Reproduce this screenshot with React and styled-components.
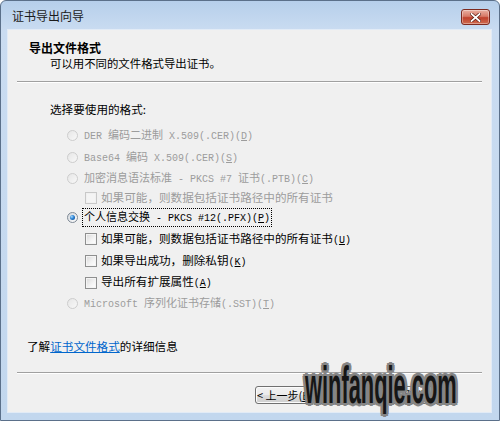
import React from 'react';
import styled, { createGlobalStyle } from 'styled-components';

const GlobalStyle = createGlobalStyle`
  body {
    margin: 0;
    overflow: hidden;
    font-family: "Noto Sans CJK SC", "Liberation Sans", sans-serif;
  }
`;

const Window = styled.div`
  position: relative;
  width: 500px;
  height: 421px;
  box-sizing: border-box;
  border: 1px solid #5b708a;
  border-radius: 6px 6px 0 0;
  background: linear-gradient(180deg, #b6cfeb 0px, #cadcf1 30px, #c2d7ee 100%);
  display: flex;
  flex-direction: column;
  overflow: hidden;
`;

const TitleBar = styled.div`
  height: 28px;
  flex-shrink: 0;
  display: flex;
  align-items: flex-start;
  justify-content: space-between;
  padding: 0 9px 0 11px;
`;

const Caption = styled.div`
  padding-top: 7px;
  font-size: 12px;
  line-height: 16px;
  color: #1b1b1b;
`;

const CloseButton = styled.div`
  margin-top: 8px;
  width: 29px;
  height: 16px;
  box-sizing: border-box;
  border: 1px solid #7d2a20;
  border-radius: 3px;
  background: linear-gradient(180deg, #eab0a2 0%, #d77a68 45%, #c0412d 55%, #cf6c50 100%);
  display: flex;
  align-items: center;
  justify-content: center;
  box-shadow: inset 0 0 0 1px rgba(255, 255, 255, 0.35);
`;

// client area of the dialog
const Client = styled.div`
  flex: 1;
  margin: 0 7px 7px 6px;
  border: 1px solid #e2ebf6;
  background: #f0f0f0;
  display: flex;
  flex-direction: column;
`;

const Header = styled.div`
  padding: 11px 0 0 21px;
`;

const HeaderTitle = styled.div`
  font-size: 12px;
  font-weight: bold;
  line-height: 14px;
  color: #000;
`;

const HeaderSub = styled.div`
  margin-top: 1px;
  padding-left: 21px;
  font-size: 11.4px;
  line-height: 14px;
  color: #000;
`;

const Rule = styled.div`
  margin: ${p => p.$top}px 9px 0;
  border-top: 1px solid #a0a0a0;
  border-bottom: 1px solid #ffffff;
`;

const Body = styled.div`
  padding: 19px 0 0 42px;
`;

const Prompt = styled.div`
  font-size: 11.6px;
  line-height: 14px;
  color: #000;
`;

const Options = styled.div`
  margin-top: 8px;
  padding-left: 17px;
  display: flex;
  flex-direction: column;
`;

const Row = styled.div`
  height: ${p => p.$h || 21}px;
  display: flex;
  align-items: center;
  padding-left: ${p => (p.$sub ? 18 : 0)}px;
  gap: ${p => (p.$sub ? 3 : 5)}px;
  color: ${p => (p.$disabled ? '#9c9c9c' : '#000')};
`;

const Radio = styled.span`
  position: relative;
  width: 11px;
  height: 11px;
  box-sizing: border-box;
  border-radius: 50%;
  flex-shrink: 0;
  border: 1px solid ${p => (p.$disabled ? '#cdcdcd' : '#7f8a96')};
  background: ${p =>
    p.$disabled
      ? 'linear-gradient(135deg, #e6e6e6, #f8f8f8)'
      : 'linear-gradient(135deg, #d2d6da, #ffffff)'};

  &::after {
    content: '';
    display: ${p => (p.$checked ? 'block' : 'none')};
    position: absolute;
    left: 2px;
    top: 2px;
    width: 5px;
    height: 5px;
    border-radius: 50%;
    background: radial-gradient(circle at 35% 35%, #a9dcff 0%, #2b82d4 45%, #0c3f82 100%);
  }
`;

const Check = styled.span`
  width: 12px;
  height: 12px;
  box-sizing: border-box;
  flex-shrink: 0;
  border: 1px solid ${p => (p.$disabled ? '#c8c8c8' : '#8e8f8f')};
  background: ${p =>
    p.$disabled
      ? '#f4f4f4'
      : 'linear-gradient(135deg, #d8d8d8 0%, #f4f4f4 60%, #ffffff 100%)'};
  box-shadow: inset 0 0 0 1px ${p => (p.$disabled ? '#f0f0f0' : '#f4f4f4')};
`;

const OptionText = styled.span`
  font-size: ${p => (p.$sans ? 11.6 : 11)}px;
  line-height: 15px;
  white-space: nowrap;
  padding: 0 1px;
  outline: ${p => (p.$focus ? '1px dotted #000' : 'none')};
`;

const Half = styled.span`
  font-family: "Liberation Mono", monospace;
  font-size: 10px;
`;

const LinkLine = styled.div`
  margin-top: 25px;
  padding-left: 19px;
  font-size: 11.6px;
  line-height: 14px;
  color: #000;
`;

const Link = styled.span`
  color: #0066cc;
  text-decoration: underline;
`;

const ButtonRow = styled.div`
  margin-top: 12px;
  display: flex;
  justify-content: flex-end;
  padding-right: 46px;
`;

const Button = styled.div`
  width: 60px;
  height: 18px;
  box-sizing: border-box;
  margin-left: ${p => p.$gap || 0}px;
  border: 1px solid ${p => (p.$default ? '#3c7fb1' : '#707070')};
  border-radius: 3px;
  background: linear-gradient(180deg, #f2f2f2 0%, #ebebeb 48%, #dddddd 52%, #cfcfcf 100%);
  box-shadow: inset 0 0 0 1px ${p => (p.$default ? '#7fd0f8' : '#fbfbfb')};
  font-size: 11px;
  line-height: 16px;
  color: #000;
  display: flex;
  align-items: center;
  justify-content: center;
  white-space: nowrap;
`;

const Watermark = styled.div`
  position: absolute;
  left: 304px;
  top: 358px;
  font-family: "Liberation Sans", sans-serif;
  font-weight: bold;
  font-size: 52px;
  line-height: 1;
  color: #161616;
  transform: scaleX(0.42);
  transform-origin: left top;
  white-space: nowrap;
  text-shadow:
    6px 0 0 #858585, -6px 0 0 #858585, 0 3px 0 #858585, 0 -3px 0 #858585,
    5px 2px 0 #858585, -5px 2px 0 #858585, 5px -2px 0 #858585, -5px -2px 0 #858585;
`;

// ascii runs drawn half-width, "&X" marks the access key
function Label({ text }) {
  const parts = text.split(/([\x20-\x7e]+)/).filter(Boolean);
  return parts.map((p, i) => {
    if (!/^[\x20-\x7e]+$/.test(p)) return <span key={i}>{p}</span>;
    const bits = p.split(/&(.)/);
    return (
      <Half key={i}>
        {bits.map((b, j) => (j % 2 ? <u key={j}>{b}</u> : b))}
      </Half>
    );
  });
}

const CloseIcon = () => (
  <svg width="11" height="9" viewBox="0 0 11 9">
    <path d="M1.5 1 L9.5 8 M9.5 1 L1.5 8" stroke="#5a1a10" strokeWidth="3.2" strokeLinecap="square" />
    <path d="M1.5 1 L9.5 8 M9.5 1 L1.5 8" stroke="#ffffff" strokeWidth="1.8" strokeLinecap="square" />
  </svg>
);

const options = [
  { type: 'radio', text: 'DER 编码二进制 X.509(.CER)(&D)', disabled: true, h: 22 },
  { type: 'radio', text: 'Base64 编码 X.509(.CER)(&S)', disabled: true, h: 22 },
  { type: 'radio', text: '加密消息语法标准 - PKCS #7 证书(.PTB)(&C)', disabled: true, h: 20 },
  { type: 'check', text: '如果可能，则数据包括证书路径中的所有证书', disabled: true, h: 19 },
  { type: 'radio', text: '个人信息交换 - PKCS #12(.PFX)(&P)', checked: true, focus: true, h: 21 },
  { type: 'check', text: '如果可能，则数据包括证书路径中的所有证书(&U)', h: 22 },
  { type: 'check', text: '如果导出成功，删除私钥(&K)', h: 22 },
  { type: 'check', text: '导出所有扩展属性(&A)', h: 21 },
  { type: 'radio', text: 'Microsoft 序列化证书存储(.SST)(&T)', disabled: true, h: 21 },
];

export default function App() {
  return (
    <>
      <GlobalStyle />
      <Window>
        <TitleBar>
          <Caption>证书导出向导</Caption>
          <CloseButton>
            <CloseIcon />
          </CloseButton>
        </TitleBar>
        <Client>
          <Header>
            <HeaderTitle>导出文件格式</HeaderTitle>
            <HeaderSub>可以用不同的文件格式导出证书。</HeaderSub>
          </Header>
          <Rule $top={11} />
          <Body>
            <Prompt>选择要使用的格式:</Prompt>
            <Options>
              {options.map((o, i) => (
                <Row key={i} $h={o.h} $sub={o.type === 'check'} $disabled={o.disabled}>
                  {o.type === 'radio' ? (
                    <Radio $checked={o.checked} $disabled={o.disabled} />
                  ) : (
                    <Check $disabled={o.disabled} />
                  )}
                  <OptionText $sans={o.type === 'check'} $focus={o.focus}>
                    <Label text={o.text} />
                  </OptionText>
                </Row>
              ))}
            </Options>
          </Body>
          <LinkLine>
            了解<Link>证书文件格式</Link>的详细信息
          </LinkLine>
          <Rule $top={19} />
          <ButtonRow>
            <Button>&lt; 上一步(<u>B</u>)</Button>
            <Button $default>下一步(<u>N</u>) &gt;</Button>
            <Button $gap={10}>取消</Button>
          </ButtonRow>
        </Client>
        <Watermark>winfanqie.com</Watermark>
      </Window>
    </>
  );
}
